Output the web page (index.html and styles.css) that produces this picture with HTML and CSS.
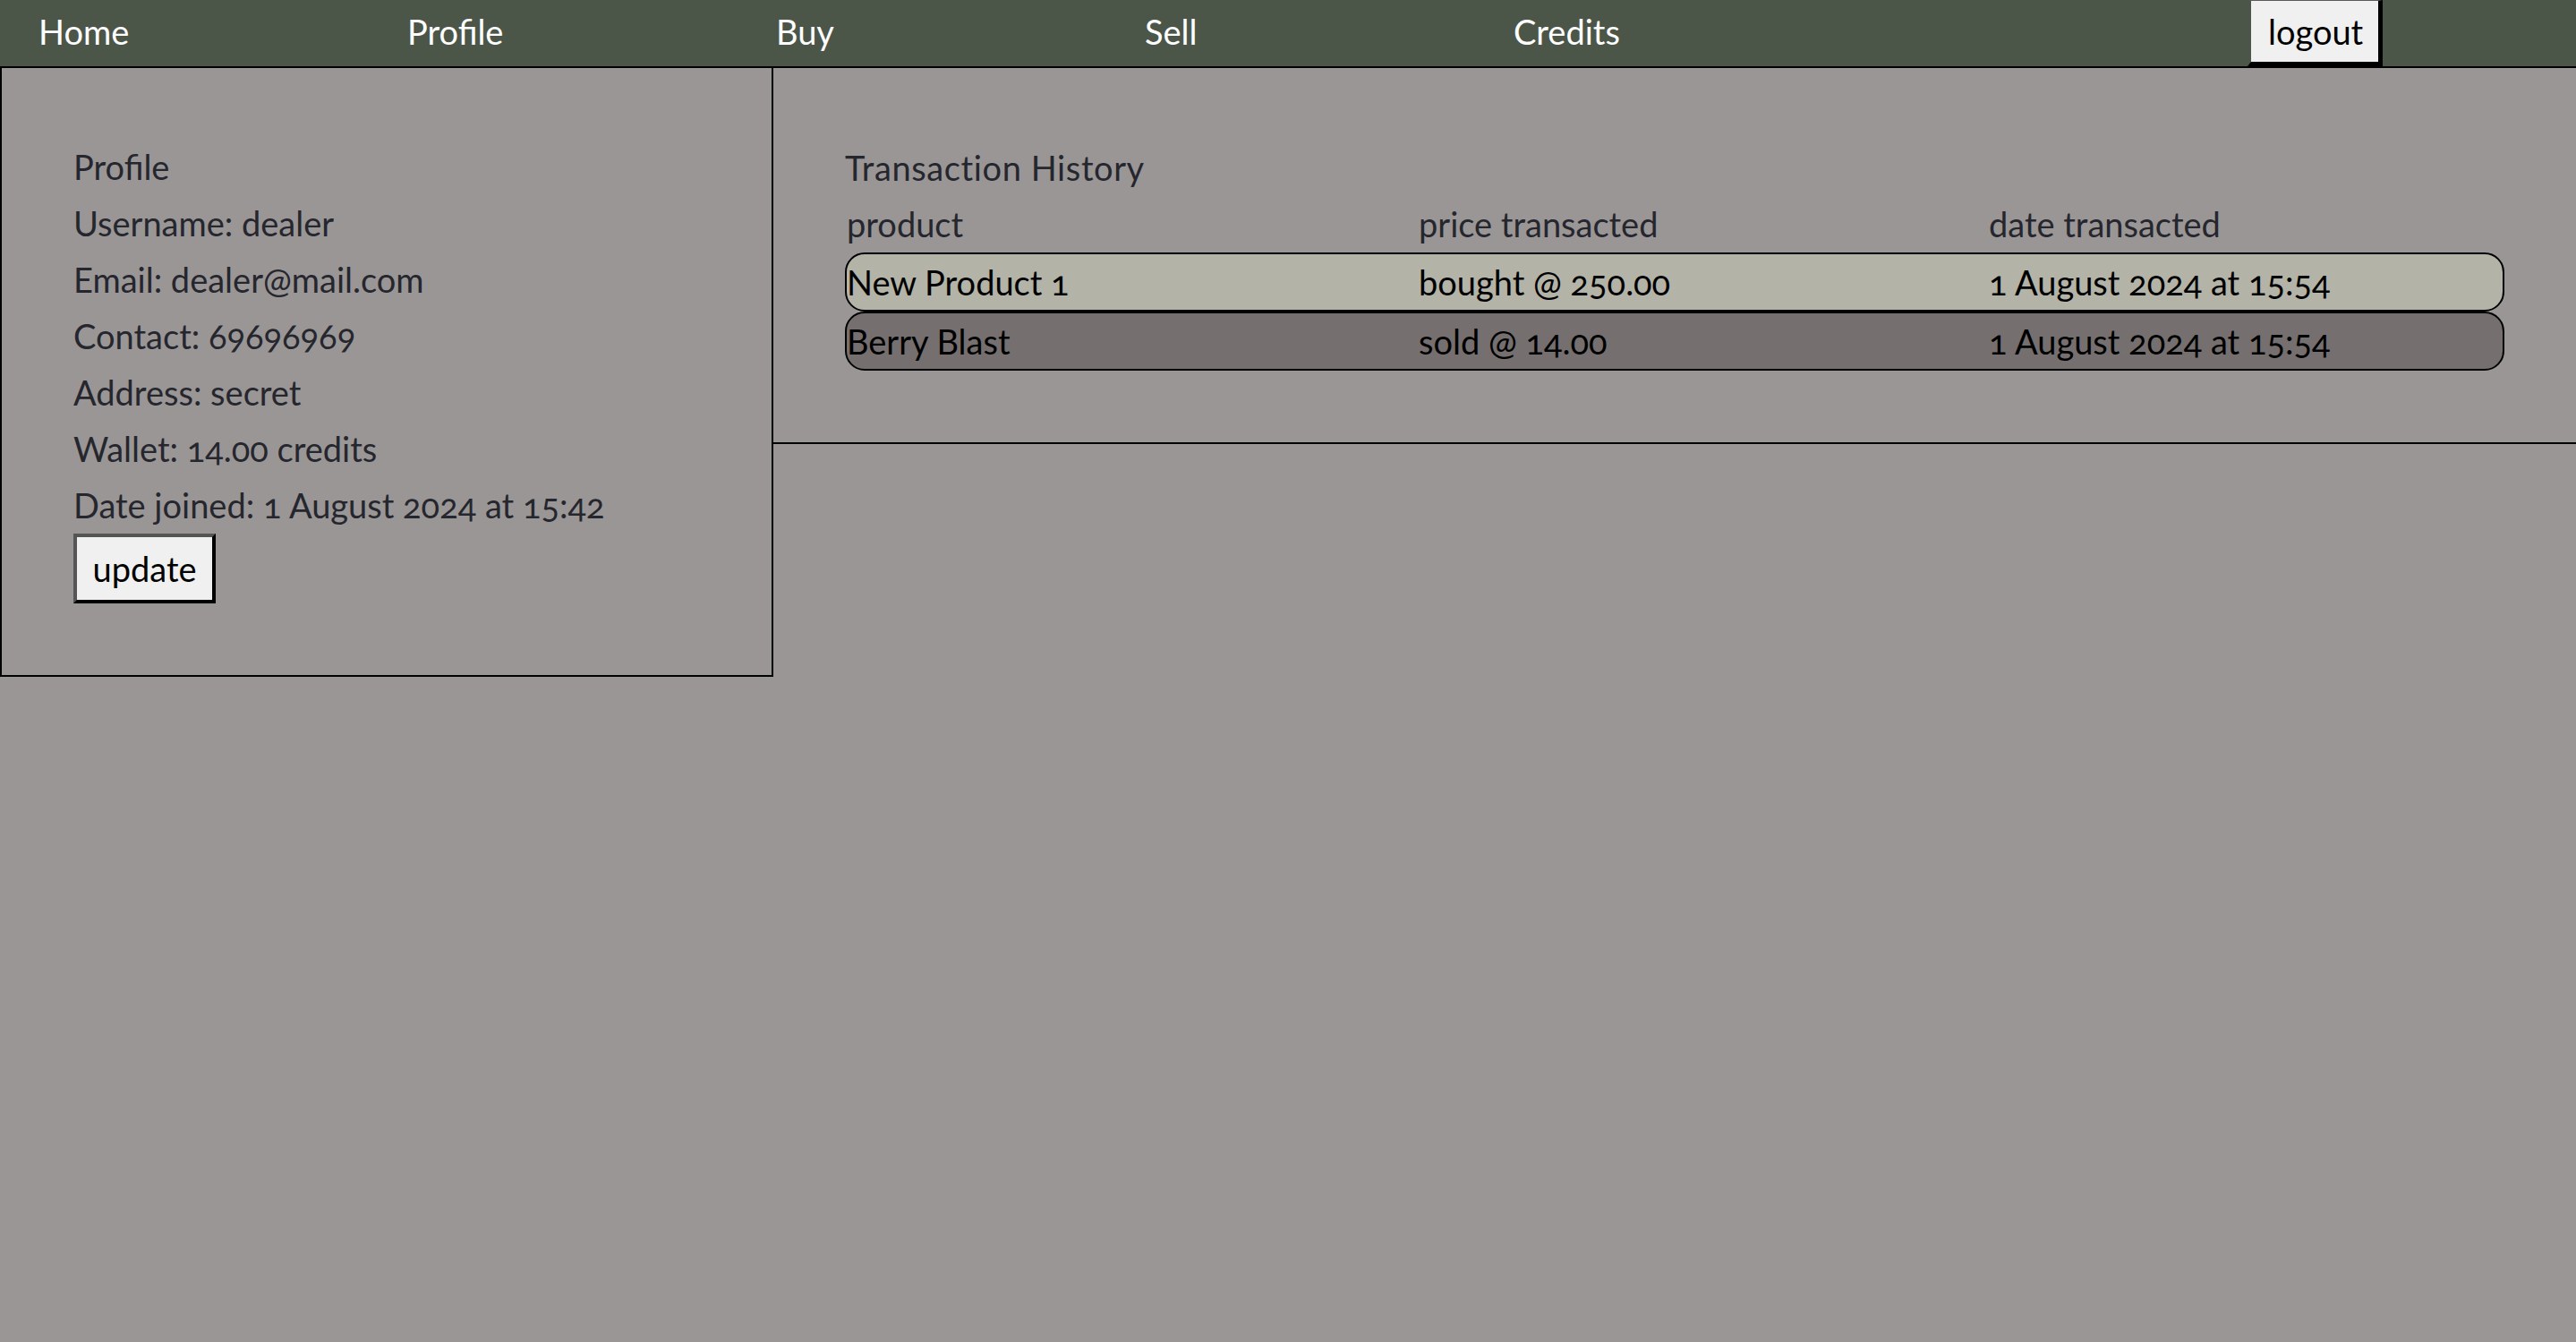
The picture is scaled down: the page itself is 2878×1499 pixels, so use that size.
FILE: index.html
```html
<!DOCTYPE html>
<html lang="en">
<head>
<meta charset="utf-8">
<title>Profile</title>
<link rel="stylesheet" href="styles.css">
</head>
<body>
<nav class="topnav">
  <a class="nav-link" href="#">Home</a>
  <a class="nav-link" href="#">Profile</a>
  <a class="nav-link" href="#">Buy</a>
  <a class="nav-link" href="#">Sell</a>
  <a class="nav-link" href="#">Credits</a>
  <span class="nav-spacer"></span>
  <div class="nav-cell"><button class="logout-btn" type="button">logout</button></div>
</nav>
<main class="page">
  <section class="panel profile-panel">
    <div class="line">Profile</div>
    <div class="line">Username: dealer</div>
    <div class="line">Email: dealer@mail.com</div>
    <div class="line">Contact: 69696969</div>
    <div class="line">Address: secret</div>
    <div class="line">Wallet: 14.00 credits</div>
    <div class="line">Date joined: 1 August 2024 at 15:42</div>
    <button class="update-btn" type="button">update</button>
  </section>
  <section class="panel history-panel">
    <div class="line title">Transaction History</div>
    <div class="tx-row tx-head">
      <span>product</span>
      <span>price transacted</span>
      <span>date transacted</span>
    </div>
    <div class="tx-row tx-bought">
      <span>New Product 1</span>
      <span>bought @ 250.00</span>
      <span>1 August 2024 at 15:54</span>
    </div>
    <div class="tx-row tx-sold">
      <span>Berry Blast</span>
      <span>sold @ 14.00</span>
      <span>1 August 2024 at 15:54</span>
    </div>
  </section>
</main>
</body>
</html>
```
FILE: styles.css
```css
html, body {
  margin: 0;
  padding: 0;
}
body {
  background: #9a9695;
  font-family: Lato, "Open Sans", sans-serif;
  overflow: hidden;
  width: 2878px;
  height: 1499px;
}
.topnav {
  display: grid;
  grid-template-columns: repeat(7, 412px);
  height: 74px;
  padding-left: 43px;
  background: #4b5649;
  box-sizing: border-box;
}
.nav-link {
  color: #ffffff;
  text-decoration: none;
  font-size: 38px;
  line-height: 70px;
}
.nav-cell {
  display: flex;
  align-items: stretch;
}
.logout-btn {
  height: 74px;
  box-sizing: border-box;
  margin: 0 0 0 -4px;
  padding: 0 17px 0 19px;
  background: #f0f0f0;
  color: #000;
  font-family: Lato, "Open Sans", sans-serif;
  font-size: 38px;
  border-style: solid;
  border-width: 1px 5px 5px 4px;
  border-color: #5a5a5a #000 #000 #4b5649;
}
.page {
  display: flex;
  align-items: flex-start;
}
.panel {
  border: 2px solid #000;
  box-sizing: border-box;
  color: #25262e;
  font-size: 38px;
  font-variant-numeric: oldstyle-nums;
}
.profile-panel {
  flex: 0 0 864px;
  padding: 79px 80px 80px 80px;
}
.history-panel {
  flex: 1 1 auto;
  border-left: none;
  border-right: none;
  padding: 80px 80px 80px 80px;
}
.line {
  line-height: 63px;
  white-space: nowrap;
}
.title {
  letter-spacing: 0.6px;
}
.update-btn {
  display: block;
  box-sizing: border-box;
  width: 159px;
  height: 78px;
  padding: 0;
  background: #f0f0f0;
  color: #000;
  font-family: Lato, "Open Sans", sans-serif;
  font-size: 38px;
  border-style: solid;
  border-width: 4px;
  border-color: #555 #000 #000 #555;
}
.tx-row {
  display: grid;
  grid-template-columns: 639px 637px 1fr;
  border: 2px solid transparent;
  box-sizing: border-box;
  height: 66px;
  line-height: 62px;
  border-radius: 22px;
  white-space: nowrap;
}
.tx-head {
  height: 64px;
  line-height: 60px;
  margin-top: -1px;
}
.tx-bought {
  background: #b3b3a7;
  border-color: #000;
  color: #000;
}
.tx-sold {
  background: #756f6f;
  border-color: #000;
  color: #000;
}
```
